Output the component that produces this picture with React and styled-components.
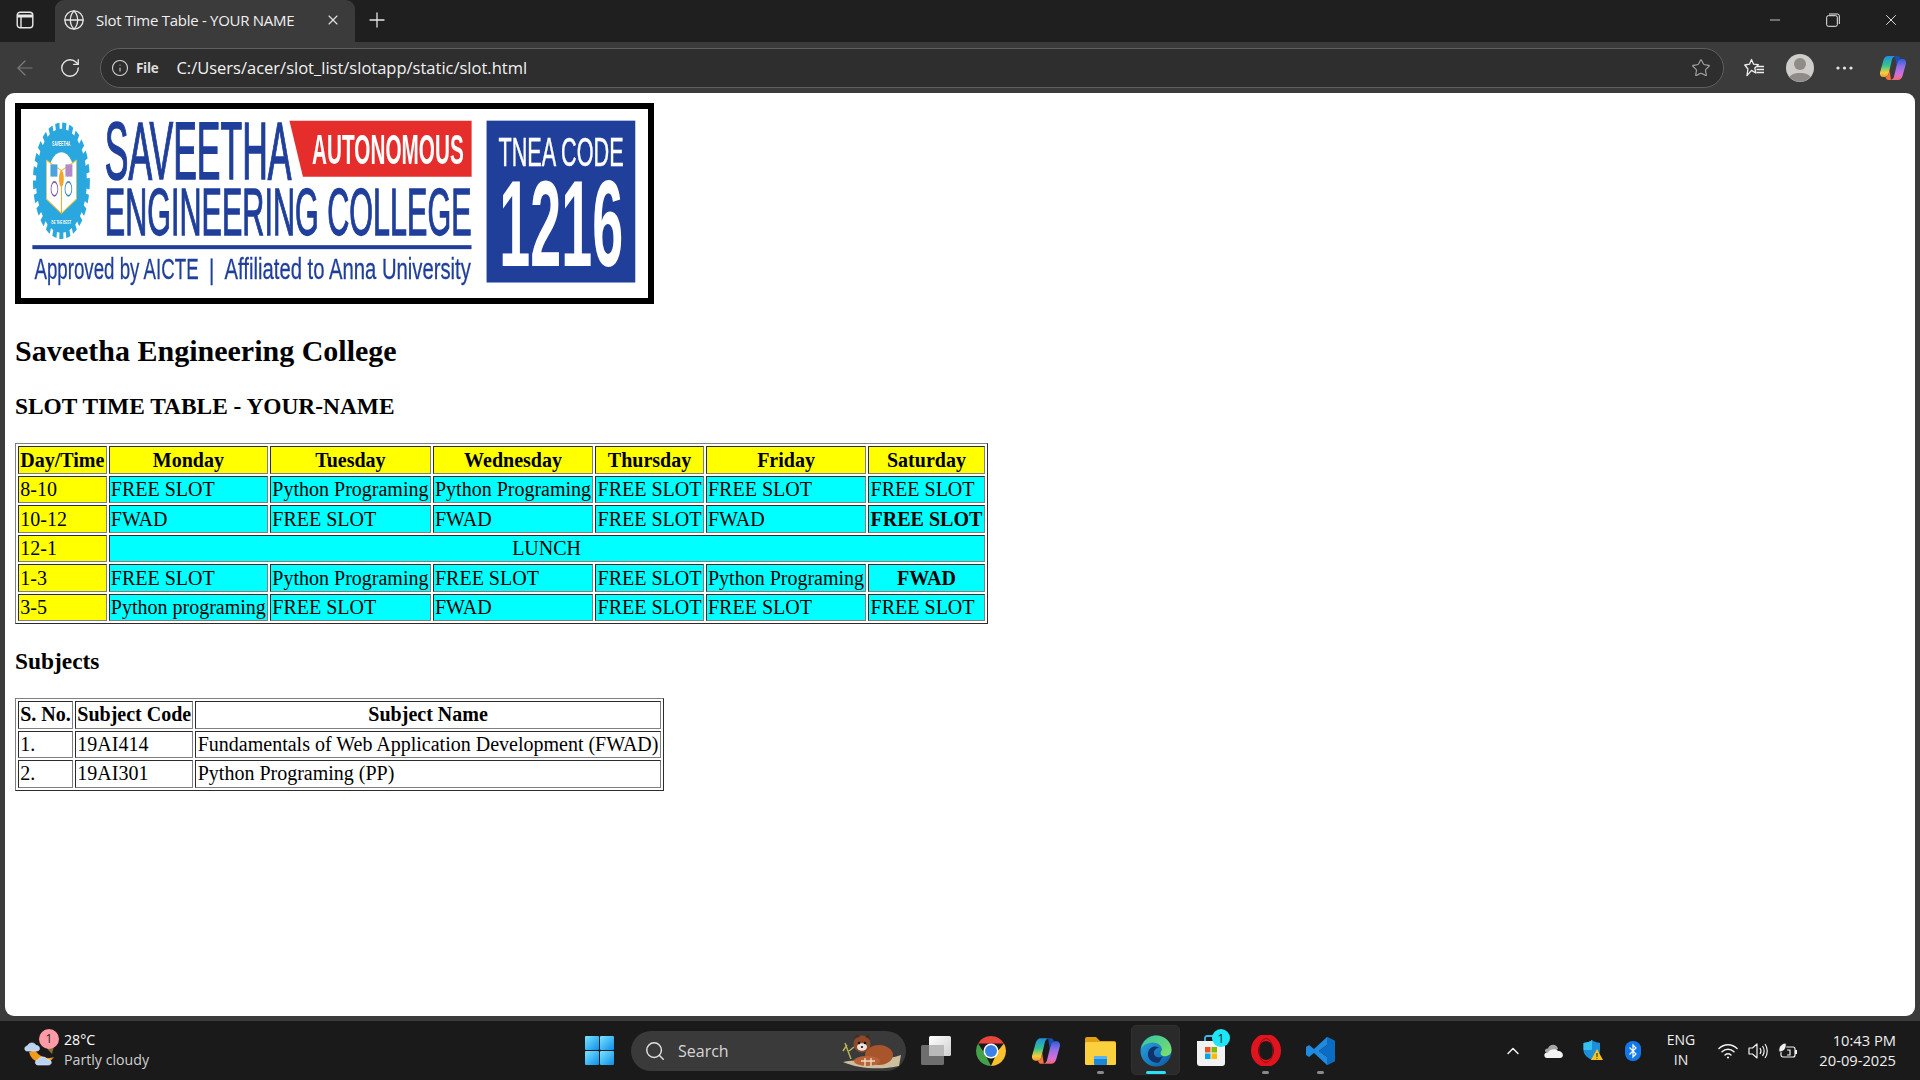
import React from "react";
import styled, { createGlobalStyle } from "styled-components";
import { ArrowLeft, RotateCw, Info, Star, Plus, X, Minus, Globe, ChevronUp, Search } from "lucide-react";

const Global = createGlobalStyle`
  html, body { margin: 0; padding: 0; height: 100%; overflow: hidden; background: #3b3b3b; }
  #root { height: 100%; }
`;

const UI = `"Open Sans", "Noto Sans", sans-serif`;

const Shell = styled.div`
  width: 1920px; height: 1080px; display: flex; flex-direction: column;
  background: #3b3b3b; font-family: ${UI}; color: #fff; overflow: hidden;
`;
const TitleBar = styled.div`
  height: 42px; flex: none; background: #1f1f1f; display: flex; align-items: stretch;
`;
const SideToggle = styled.div`
  width: 49px; margin-right: 6px; padding-bottom: 2px; box-sizing: border-box; flex: none;
  display: flex; align-items: center; justify-content: center;
`;
const Tab = styled.div`
  width: 300px; flex: none; background: #3b3b3b; border-radius: 9px 9px 0 0;
  display: flex; align-items: center; padding: 0 14px 2px 8px; box-sizing: border-box; gap: 11px;
`;
const TabTitle = styled.span`
  flex: 1; font-size: 15px; letter-spacing: -0.28px; color: #f0f0f0; white-space: nowrap;
`;
const NewTab = styled.div`
  width: 42px; flex: none; display: flex; align-items: center; justify-content: center; margin-left: 1px; padding-bottom: 2px; box-sizing: border-box;
`;
const WindowButtons = styled.div`
  margin-left: auto; display: flex; padding-bottom: 2px;
`;
const WinBtn = styled.div`
  width: 58px; display: flex; align-items: center; justify-content: center;
`;
const Toolbar = styled.div`
  height: 51px; flex: none; display: flex; align-items: center; padding: 0 0 0 2.5px; box-sizing: border-box;
`;
const NavBtn = styled.div`
  width: 45px; height: 40px; flex: none; display: flex; align-items: center; justify-content: center;
  color: ${p => (p.$dim ? "#7b7b7b" : "#e6e6e6")};
`;
const Address = styled.div`
  width: 1624px; height: 40px; flex: none; margin-left: 7.5px; box-sizing: border-box;
  border: 1px solid #5f5f5f; border-radius: 20px; background: #2e2e2e;
  display: flex; align-items: center; padding: 0 12px 0 10px;
`;
const FileChip = styled.span`
  font-size: 13.5px; font-weight: 700; color: #ddd; margin: 0 18px 0 7px; letter-spacing: -0.3px;
`;
const Url = styled.span`
  font-size: 16.5px; color: #f2f2f2;
`;
const Tools = styled.div`
  display: flex; align-items: center; flex: none; margin-left: 8px;
`;
const ToolBtn = styled.div`
  width: 45px; height: 40px; display: flex; align-items: center; justify-content: center;
  margin-left: ${p => p.$shift || 0}px;
`;
const Viewport = styled.div`
  flex: 1; min-height: 0; margin: 0 5px; background: #fff; border-radius: 9px; overflow: hidden;
  color: #000; font-family: "Liberation Serif", "Times New Roman", serif;
`;
const Page = styled.div`
  zoom: 1.25; padding: 8px; font-size: 16px; color: #000;
`;
const LogoSvg = styled.svg`
  display: inline-block; width: 501.4px; height: 151.4px; border: 5px solid #000; background: #fff;
  box-sizing: content-box; filter: blur(0.3px);
`;
const CollegeName = styled.h2`
  font-size: 1.5em; margin: 0.83em 0; font-weight: 700;
`;
const Subtitle = styled.h3`
  font-size: 1.17em; margin: 1em 0; font-weight: 700;
`;
const Grid = styled.table.attrs({ border: "1" })`
  font-size: 16px; color: #000;
`;
const Head = styled.th`
  background: ${p => p.$bg || "transparent"};
`;
const Cell = styled.td`
  background: ${p => p.$bg || "transparent"};
  text-align: ${p => (p.$center ? "center" : "left")};
`;
const Strong = styled.th`
  background: #0ff;
`;
const Strip = styled.div`
  height: 5px; flex: none;
`;
const Taskbar = styled.div`
  height: 59px; flex: none; background: #1a1a1a; display: flex; align-items: center; position: relative;
`;
const WeatherArea = styled.div`
  flex: 0 0 572px; height: 100%; box-sizing: border-box; display: flex; align-items: center; padding: 0 0 2px 24px; gap: 7px;
`;
const WeatherIcon = styled.div`
  position: relative; width: 33px; height: 36px; flex: none;
`;
const Badge = styled.span`
  position: absolute; top: -3px; right: -2px; width: 20px; height: 20px; border-radius: 50%;
  background: #ff9aa6; color: #222; font-size: 12px; display: flex; align-items: center; justify-content: center;
`;
const WeatherText = styled.div`
  display: flex; flex-direction: column; line-height: 20px;
`;
const Temp = styled.span`
  font-size: 14.2px; color: #fff;
`;
const Cond = styled.span`
  font-size: 14.2px; color: #d0d0d0;
`;
const TaskCell = styled.div`
  width: 55px; height: 100%; flex: none; display: flex; align-items: center; justify-content: center; position: relative;
`;
const ActiveTile = styled.div`
  position: absolute; left: 3px; right: 3px; top: 4px; bottom: 5px; background: #2a2a2a; border-radius: 5px; border: 1px solid #303030;
`;
const IconHolder = styled.div`
  position: relative; display: flex; line-height: 0;
`;
const RunDot = styled.span`
  position: absolute; bottom: 6px; left: 50%; height: 3px; border-radius: 2px;
  width: ${p => (p.$active ? "20px" : "7px")}; margin-left: ${p => (p.$active ? "-10px" : "-3.5px")};
  background: ${p => (p.$active ? "#29e0f5" : "#8a8a8a")};
`;
const CountBadge = styled.span`
  position: absolute; top: 8px; right: 8px; width: 18px; height: 18px; border-radius: 50%;
  background: #1fe6f5; color: #123; font-size: 12px; display: flex; align-items: center; justify-content: center;
`;
const SearchBox = styled.div`
  width: 275px; height: 40px; flex: none; margin: 0 2px 0 4px; border-radius: 20px; background: #3a3a3a;
  box-sizing: border-box; display: flex; align-items: center; padding-left: 13px; gap: 12px; position: relative;
  color: #d6d6d6; font-size: 16px;
`;
const Panda = styled.svg`
  position: absolute; right: 3px; top: 2px;
`;
const Tray = styled.div`
  margin-left: auto; display: flex; align-items: center; height: 100%; padding-right: 24px;
`;
const TrayCell = styled.div`
  width: ${p => p.$w || 40}px; display: flex; align-items: center; justify-content: center; flex: none;
`;
const Lang = styled.div`
  width: 56px; margin-right: 4px; padding-bottom: 2px; flex: none; text-align: center; font-size: 14px; line-height: 20px; color: #f0f0f0;
`;
const Clock = styled.div`
  width: 93px; flex: none; padding-bottom: 2px; text-align: right; font-size: 14.7px; line-height: 20px; color: #f0f0f0; white-space: nowrap;
`;

const LB = "#1f3f9b";
const Logo = () => (
  <LogoSvg viewBox="0 0 628 190" preserveAspectRatio="none" role="img" aria-label="Saveetha Engineering College logo">
    <g transform="translate(40.5 72) scale(1 2.05)">
      <circle r="26.5" fill="none" stroke="#2aa7df" strokeWidth="4" strokeDasharray="4 2.6" />
      <circle r="25.5" fill="#2aa7df" />
      <circle r="14" fill="#fff" />
      <path d="M-15 -10 L0 -5 L15 -10 L15 9 L0 16 L-15 9 Z" fill="#fff" stroke="#f3c23a" strokeWidth="0.6" />
      <path d="M0 -5 L0 16" stroke="#e6a52a" strokeWidth="1" />
      <rect x="-11" y="-8" width="7" height="6" fill="#4aa3df" />
      <rect x="4" y="-8" width="7" height="6" fill="#b289c9" />
      <circle cx="-7" cy="4" r="3.4" fill="none" stroke="#7b5aa6" strokeWidth="0.8" />
      <circle cx="7" cy="4" r="3.4" fill="none" stroke="#3a86c8" strokeWidth="0.8" />
      <ellipse cx="0" cy="-1" rx="2.4" ry="4" fill="#f2a62a" />
      <text y="-17" textAnchor="middle" fontSize="3.4" fontWeight="700" fill="#fff" fontFamily="Liberation Sans">SAVEETHA</text>
      <text y="21" textAnchor="middle" fontSize="3" fontWeight="700" fill="#fff" fontFamily="Liberation Sans">BE THE BEST</text>
    </g>
    <g fontFamily="'Liberation Sans', sans-serif">
      <text x="84" y="70" fontSize="81" fill={LB} stroke={LB} strokeWidth="1.6" textLength="187" lengthAdjust="spacingAndGlyphs">SAVEETHA</text>
      <polygon points="269,11.7 451.5,11.7 451.5,68 282.5,68" fill="#e52d2b" />
      <text x="291.7" y="55" fontSize="42" fontWeight="700" fill="#fff" textLength="152" lengthAdjust="spacingAndGlyphs">AUTONOMOUS</text>
      <text x="84" y="126.7" fontSize="67" fill={LB} stroke={LB} strokeWidth="1.4" textLength="367.5" lengthAdjust="spacingAndGlyphs">ENGINEERING COLLEGE</text>
      <rect x="11.4" y="136.7" width="440" height="4" fill={LB} />
      <text x="13.5" y="170.7" fontSize="29" fill={LB} stroke={LB} strokeWidth="0.3" textLength="164.5" lengthAdjust="spacingAndGlyphs">Approved by AICTE</text>
      <rect x="190" y="150" width="2" height="27" fill={LB} />
      <text x="204" y="170.7" fontSize="29" fill={LB} stroke={LB} strokeWidth="0.3" textLength="246.7" lengthAdjust="spacingAndGlyphs">Affiliated to Anna University</text>
      <rect x="466.5" y="11.7" width="149" height="162.5" fill={LB} />
      <text x="478.4" y="57" fontSize="40" fill="#fff" stroke="#fff" strokeWidth="0.5" textLength="125.4" lengthAdjust="spacingAndGlyphs">TNEA CODE</text>
      <text x="479.3" y="158" fontSize="122" fontWeight="700" fill="#fff" textLength="124" lengthAdjust="spacingAndGlyphs">1216</text>
    </g>
  </LogoSvg>
);

const SidebarIcon = () => (
  <svg width="18" height="18" viewBox="0 0 18 18" fill="none" stroke="#e8e8e8" strokeWidth="1.4">
    <rect x="1.2" y="1.2" width="15.6" height="15.6" rx="3" />
    <path d="M1.2 5 H16.8" strokeWidth="3" />
    <path d="M5 5 V16.8" />
  </svg>
);
const RestoreIcon = () => (
  <svg width="14" height="14" viewBox="0 0 14 14" fill="none" stroke="#eee" strokeWidth="1">
    <rect x="0.7" y="2.7" width="10.6" height="10.6" rx="1.6" />
    <path d="M3 1 H11.5 A1.8 1.8 0 0 1 13.3 2.8 V11" />
  </svg>
);
const FavIcon = () => (
  <svg width="21" height="20" viewBox="0 0 21 20" fill="none" stroke="#eee" strokeWidth="1.3" strokeLinejoin="round">
    <path d="M7.5 1.5 L9.6 6.2 L14.4 6.7 L10.8 10 L11.8 15 L7.5 12.4 L3 17.6 L3.9 11 L0.8 7 L5.5 6.2 Z" />
    <path d="M13 8.5 H20 M12.5 11.5 H20 M12.5 14.5 H20" />
  </svg>
);
const Avatar = () => (
  <svg width="28" height="28" viewBox="0 0 28 28">
    <circle cx="14" cy="14" r="14" fill="#cfcdca" />
    <circle cx="14" cy="10" r="6" fill="#8f8b87" />
    <path d="M3.5 23 C6 17.5 22 17.5 24.5 23 A14 14 0 0 1 3.5 23 Z" fill="#8f8b87" />
  </svg>
);
const Dots = () => (
  <svg width="17" height="4" viewBox="0 0 17 4" fill="#e6e6e6">
    <circle cx="2" cy="2" r="1.6" /><circle cx="8.5" cy="2" r="1.6" /><circle cx="15" cy="2" r="1.6" />
  </svg>
);
const CopilotIcon = ({ id, size = 28 }) => (
  <svg width={size} height={size} viewBox="0 0 28 28">
    <defs>
      <linearGradient id={`${id}a`} x1="0" y1="0" x2="0" y2="1">
        <stop offset="0" stopColor="#1f8fe0" /><stop offset="0.45" stopColor="#35c28f" /><stop offset="0.8" stopColor="#f4d03f" /><stop offset="1" stopColor="#f49a2a" />
      </linearGradient>
      <linearGradient id={`${id}b`} x1="0" y1="0" x2="0" y2="1">
        <stop offset="0" stopColor="#2a5fd8" /><stop offset="0.35" stopColor="#8f6ee8" /><stop offset="0.75" stopColor="#d46fd8" /><stop offset="1" stopColor="#f46a6a" />
      </linearGradient>
    </defs>
    <path d="M9 2 H17 C15 2 13.5 3.5 13 5.5 L9.5 20 C9 22 7.5 23 6 23 H4 C2 23 .5 21 1 18.5 L4.5 6 C5.3 3.5 7 2 9 2 Z" fill={`url(#${id}a)`} />
    <path d="M19 26 H11 C13 26 14.5 24.5 15 22.5 L18.5 8 C19 6 20.5 5 22 5 H24 C26 5 27.5 7 27 9.5 L23.5 22 C22.7 24.5 21 26 19 26 Z" fill={`url(#${id}b)`} />
    <path d="M16 2 H18.5 C20 2 21 3.2 21.5 5 H22 C20.5 5 19 6 18.5 8 L17.5 12 Z" fill="#1b4fb8" />
    <path d="M12 26 H9.5 C8 26 7 24.8 6.5 23 H6 C7.5 23 9 22 9.5 20 L10.5 16 Z" fill="#f5743a" />
  </svg>
);
const WeatherSvg = () => (
  <svg width="33" height="36" viewBox="0 0 33 36">
    <path d="M5 20 A14 14 0 0 0 30 25 A16 16 0 0 1 11 18 Z" fill="#f09a1e" />
    <path d="M3 19 C0 19 0 14 3.500 14 C4.500 10 11 10 12 13.500 C16 13 17 19 13 19 Z" fill="#b9d3f5" stroke="#e8f0fc" strokeWidth="0.6" />
    <path d="M14 33 C10.500 33 10.500 28 14 28 C15 24 22 24 23 27.500 C28 27 29 33 24 33 Z" fill="#b9d3f5" stroke="#e8f0fc" strokeWidth="0.6" />
    <path d="M18 11 L30 14 L28 22 Z" fill="#f2c04a" opacity="0.5" />
  </svg>
);
const WinLogo = () => (
  <svg width="29" height="29" viewBox="0 0 29 29">
    <defs>
      <linearGradient id="win" x1="0" y1="0" x2="1" y2="1">
        <stop offset="0" stopColor="#7be3ff" /><stop offset="1" stopColor="#0c8fe8" />
      </linearGradient>
    </defs>
    <rect width="14" height="14" rx="1" fill="url(#win)" /><rect x="15" width="14" height="14" rx="1" fill="url(#win)" />
    <rect y="15" width="14" height="14" rx="1" fill="url(#win)" /><rect x="15" y="15" width="14" height="14" rx="1" fill="url(#win)" />
  </svg>
);
const RedPanda = () => (
  <Panda width="62" height="36" viewBox="0 0 62 36">
    <path d="M4 10 L10 26 M6 12 L2 18 M8 18 L13 14" stroke="#b9b65a" strokeWidth="1.4" fill="none" />
    <path d="M2 29 C14 26 44 28 60 22 L58 33 C40 37 18 36 2 29 Z" fill="#cdbf9e" />
    <ellipse cx="38" cy="22" rx="14" ry="10" fill="#a9552c" />
    <ellipse cx="26" cy="28" rx="13" ry="5" fill="#b8623a" />
    <path d="M20 28 H34 M24 25 V33 M30 25 V33" stroke="#f0d8c0" strokeWidth="1.4" />
    <circle cx="21" cy="11" r="8.500" fill="#8c4a2a" />
    <path d="M13 5 L16 1 L19 4 Z M24 4 L28 1 L29 6 Z" fill="#4a2a1a" />
    <ellipse cx="21" cy="14" rx="5" ry="3.800" fill="#efe5da" />
    <circle cx="18" cy="10" r="1.200" fill="#111" /><circle cx="24" cy="10" r="1.200" fill="#111" /><circle cx="21" cy="14" r="1.100" fill="#111" />
  </Panda>
);
const TaskViewIcon = () => (
  <svg width="30" height="29" viewBox="0 0 30 29">
    <defs><linearGradient id="tv" x1="0" y1="0" x2="1" y2="1"><stop offset="0" stopColor="#fff" /><stop offset="1" stopColor="#cfcfcf" /></linearGradient></defs>
    <rect x="8" y="0" width="22" height="20" rx="1.500" fill="url(#tv)" />
    <rect y="9" width="23" height="20" rx="1.500" fill="#6e6e6e" />
    <rect x="8" y="9" width="15" height="11" fill="#b9b9b9" />
  </svg>
);
const ChromeIcon = () => (
  <svg width="30" height="30" viewBox="4 4 40 40">
    <path d="M24 4 A20 20 0 0 1 41.300 14 H24 L6.700 14 A20 20 0 0 1 24 4 Z" fill="#e8453c" />
    <path d="M41.300 14 A20 20 0 0 1 24 44 L33 24 Z" fill="#fbc02d" />
    <path d="M24 44 A20 20 0 0 1 6.700 14 L16 28 Z" fill="#43a047" />
    <circle cx="24" cy="24" r="10" fill="#fff" /><circle cx="24" cy="24" r="8" fill="#3b82e6" />
  </svg>
);
const FolderIcon = () => (
  <svg width="31" height="28" viewBox="0 0 31 28">
    <path d="M0 2 A2 2 0 0 1 2 0 H11 L15 4 H29 A2 2 0 0 1 31 6 V10 H0 Z" fill="#e0a012" />
    <rect y="5" width="31" height="23" rx="1.500" fill="#fbd03f" />
    <rect x="9" y="19" width="13" height="9" rx="1" fill="#1c86d8" />
    <rect x="9" y="19" width="13" height="3" fill="#57b4f0" />
  </svg>
);
const EdgeIcon = () => (
  <svg width="32" height="32" viewBox="0 0 32 32">
    <defs>
      <linearGradient id="e1" x1="0" y1="0" x2="1" y2="1"><stop offset="0" stopColor="#35c5a0" /><stop offset="1" stopColor="#7fe06a" /></linearGradient>
      <linearGradient id="e2" x1="0" y1="0" x2="1" y2="1"><stop offset="0" stopColor="#2aa8e0" /><stop offset="1" stopColor="#0c59a4" /></linearGradient>
    </defs>
    <circle cx="16" cy="16" r="15.500" fill="url(#e2)" />
    <path d="M1 14 C3 5 10 .5 16 .5 C25 .5 31.500 7 31.500 15 C31.500 20 27 22 23 21 C20 20 20 17 22 15 C22 9 15 6 9 8 C5 9 2 11 1 14 Z" fill="url(#e1)" />
    <path d="M23 21 C19 24 14 22 14 18 C14 15 16 13 19 13 C15 10 9 12 8 18 C7 24 13 29 19 27.500 Z" fill="#10336e" />
  </svg>
);
const StoreIcon = () => (
  <svg width="30" height="32" viewBox="0 0 30 32">
    <path d="M9 6 V3 A2 2 0 0 1 11 1 H19 A2 2 0 0 1 21 3 V6" fill="none" stroke="#3db6ef" strokeWidth="1.800" />
    <path d="M1 6 H29 V28 A3 3 0 0 1 26 31 H4 A3 3 0 0 1 1 28 Z" fill="#f2f2f2" />
    <rect x="9" y="12" width="5.500" height="5.500" fill="#f25022" /><rect x="15.500" y="12" width="5.500" height="5.500" fill="#7fba00" />
    <rect x="9" y="18.500" width="5.500" height="5.500" fill="#00a4ef" /><rect x="15.500" y="18.500" width="5.500" height="5.500" fill="#ffb900" />
  </svg>
);
const OperaIcon = () => (
  <svg width="30" height="31" viewBox="0 0 30 31">
    <ellipse cx="15" cy="15.500" rx="11.500" ry="13" fill="none" stroke="#e0141f" strokeWidth="7" />
    <ellipse cx="15" cy="15.500" rx="7" ry="12" fill="none" stroke="#9c0a12" strokeWidth="1" />
  </svg>
);
const CodeIcon = () => (
  <svg width="30" height="30" viewBox="0 0 30 30">
    <path d="M21 1 L29 5 V25 L21 29 L8 17 L3 21 L0 19 V11 L3 9 L8 13 Z M21 9 L13 15 L21 21 Z" fill="#1f8ae0" fillRule="evenodd" />
    <path d="M21 1 L29 5 V25 L21 29 Z M21 9 L13 15 L21 21 Z" fill="#0a6cc2" fillRule="evenodd" />
  </svg>
);
const CloudIcon = () => (
  <svg width="21" height="14" viewBox="0 0 21 14">
    <path d="M5 9 C1 9 1 4 5 4.500 C6.500 -0.500 14 -0.500 15 5 L8 9 Z" fill="#a5a5a5" />
    <path d="M4 14 C0.500 14 0 8 5 8.500 C7 4.500 13.500 4.500 15 7 C20 6.500 22 14 17 14 Z" fill="#f3f3f3" />
  </svg>
);
const ShieldIcon = () => (
  <svg width="20" height="21" viewBox="0 0 20 21">
    <path d="M9 0 C11 2 14 2.500 17 3 V10 C17 15 13 18 9 20 C5 18 0.500 15 0.500 10 V3 C4 2.500 7 2 9 0 Z" fill="#1d8fd8" />
    <path d="M9 0 V10 H0.500 V3 C4 2.500 7 2 9 0 Z" fill="#35c0ef" />
    <path d="M14 9 L20 20 H8 Z" fill="#f8c31d" />
    <path d="M14 13 V17 M14 18 V19" stroke="#222" strokeWidth="1" />
  </svg>
);
const BtIcon = () => (
  <svg width="16" height="20" viewBox="0 0 16 20">
    <rect width="16" height="20" rx="7.500" fill="#1479e8" />
    <path d="M4.500 6.500 L11 13 L8 16 V4 L11 7 L4.500 13.500" fill="none" stroke="#fff" strokeWidth="1.200" />
  </svg>
);
const WifiIcon = () => (
  <svg width="20" height="16" viewBox="0 0 20 16" fill="none" stroke="#f2f2f2" strokeWidth="1.500" strokeLinecap="round">
    <path d="M1 5.500 C6 .5 14 .5 19 5.500" /><path d="M4 8.800 C7.500 5.500 12.500 5.500 16 8.800" /><path d="M7 12 C8.800 10.500 11.200 10.500 13 12" />
    <circle cx="10" cy="14.500" r="1.100" fill="#f2f2f2" stroke="none" />
  </svg>
);
const VolIcon = () => (
  <svg width="20" height="18" viewBox="0 0 20 18" fill="none" stroke="#f2f2f2" strokeWidth="1.200" strokeLinejoin="round">
    <path d="M1 6 H4.500 L9 2 V16 L4.500 12 H1 Z" />
    <path d="M12 6 C13.300 8 13.300 10 12 12" /><path d="M14.500 4 C16.500 7 16.500 11 14.500 14" /><path d="M17 2 C20 6 20 12 17 16" />
  </svg>
);
const BattIcon = () => (
  <svg width="20" height="18" viewBox="0 0 20 18" fill="none" stroke="#f2f2f2" strokeWidth="1.200">
    <rect x="3" y="5" width="14" height="10" rx="2" />
    <path d="M18 8 V12" strokeWidth="2" />
    <path d="M1 9 C0 4 5 1 8 1 C9 6 6 10 1 10 Z" fill="#f2f2f2" stroke="#1a1a1a" strokeWidth="0.800" />
    <path d="M9 8 H12 V13 H9" />
  </svg>
);

const Y = "#ff0";
const A = "#0ff";
const free = "FREE SLOT";
const py = "Python Programing";

const Row = ({ time, cells }) => (
  <tr>
    <Cell $bg={Y}>{time}</Cell>
    {cells.map((c, i) => <Cell key={i} $bg={A}>{c}</Cell>)}
  </tr>
);

export default function App() {
  return (
    <Shell>
      <Global />
      <TitleBar>
        <SideToggle><SidebarIcon /></SideToggle>
        <Tab>
          <Globe size={22} color="#e6e6e6" strokeWidth={1.4} />
          <TabTitle>Slot Time Table - YOUR NAME</TabTitle>
          <X size={16} color="#e6e6e6" strokeWidth={1.6} />
        </Tab>
        <NewTab><Plus size={24} color="#e6e6e6" strokeWidth={1.3} /></NewTab>
        <WindowButtons>
          <WinBtn><Minus size={16} color="#eee" strokeWidth={1.2} /></WinBtn>
          <WinBtn><RestoreIcon /></WinBtn>
          <WinBtn><X size={18} color="#eee" strokeWidth={1.2} /></WinBtn>
        </WindowButtons>
      </TitleBar>
      <Toolbar>
        <NavBtn $dim><ArrowLeft size={24} strokeWidth={1.2} /></NavBtn>
        <NavBtn><RotateCw size={22} strokeWidth={1.5} /></NavBtn>
        <Address>
          <Info size={18} color="#d8d8d8" strokeWidth={1.4} />
          <FileChip>File</FileChip>
          <Url>C:/Users/acer/slot_list/slotapp/static/slot.html</Url>
          <Star size={20} color="#a8a8a8" strokeWidth={1.3} style={{ marginLeft: "auto" }} />
        </Address>
        <Tools>
          <ToolBtn><FavIcon /></ToolBtn>
          <ToolBtn><Avatar /></ToolBtn>
          <ToolBtn><Dots /></ToolBtn>
          <ToolBtn $shift={3}><CopilotIcon id="cpa" /></ToolBtn>
        </Tools>
      </Toolbar>
      <Viewport>
        <Page>
          <div><Logo /></div>
          <CollegeName>Saveetha Engineering College</CollegeName>
          <Subtitle>SLOT TIME TABLE - YOUR-NAME</Subtitle>
          <Grid>
            <tbody>
              <tr>
                {["Day/Time", "Monday", "Tuesday", "Wednesday", "Thursday", "Friday", "Saturday"].map(d => <Head key={d} $bg={Y}>{d}</Head>)}
              </tr>
              <Row time="8-10" cells={[free, py, py, free, free, free]} />
              <tr>
                <Cell $bg={Y}>10-12</Cell>
                <Cell $bg={A}>FWAD</Cell><Cell $bg={A}>{free}</Cell><Cell $bg={A}>FWAD</Cell>
                <Cell $bg={A}>{free}</Cell><Cell $bg={A}>FWAD</Cell><Strong>{free}</Strong>
              </tr>
              <tr>
                <Cell $bg={Y}>12-1</Cell>
                <Cell $bg={A} $center colSpan={6}>LUNCH</Cell>
              </tr>
              <tr>
                <Cell $bg={Y}>1-3</Cell>
                <Cell $bg={A}>{free}</Cell><Cell $bg={A}>{py}</Cell><Cell $bg={A}>{free}</Cell>
                <Cell $bg={A}>{free}</Cell><Cell $bg={A}>{py}</Cell><Strong>FWAD</Strong>
              </tr>
              <Row time="3-5" cells={["Python programing", free, "FWAD", free, free, free]} />
            </tbody>
          </Grid>
          <Subtitle>Subjects</Subtitle>
          <Grid>
            <tbody>
              <tr><Head>S. No.</Head><Head>Subject Code</Head><Head>Subject Name</Head></tr>
              <tr><Cell>1.</Cell><Cell>19AI414</Cell><Cell>Fundamentals of Web Application Development (FWAD)</Cell></tr>
              <tr><Cell>2.</Cell><Cell>19AI301</Cell><Cell>Python Programing (PP)</Cell></tr>
            </tbody>
          </Grid>
        </Page>
      </Viewport>
      <Strip />
      <Taskbar>
        <WeatherArea>
          <WeatherIcon><WeatherSvg /><Badge>1</Badge></WeatherIcon>
          <WeatherText><Temp>28°C</Temp><Cond>Partly cloudy</Cond></WeatherText>
        </WeatherArea>
        <TaskCell><WinLogo /></TaskCell>
        <SearchBox>
          <Search size={22} strokeWidth={1.6} color="#e0e0e0" />
          <span>Search</span>
          <RedPanda />
        </SearchBox>
        <TaskCell><TaskViewIcon /></TaskCell>
        <TaskCell><ChromeIcon /></TaskCell>
        <TaskCell><CopilotIcon id="cpb" size={30} /></TaskCell>
        <TaskCell><FolderIcon /><RunDot /></TaskCell>
        <TaskCell><ActiveTile /><IconHolder><EdgeIcon /></IconHolder><RunDot $active /></TaskCell>
        <TaskCell><StoreIcon /><CountBadge>1</CountBadge></TaskCell>
        <TaskCell><OperaIcon /><RunDot /></TaskCell>
        <TaskCell><CodeIcon /><RunDot /></TaskCell>
        <Tray>
          <TrayCell><ChevronUp size={20} color="#f2f2f2" strokeWidth={1.8} /></TrayCell>
          <TrayCell><CloudIcon /></TrayCell>
          <TrayCell><ShieldIcon /></TrayCell>
          <TrayCell><BtIcon /></TrayCell>
          <Lang>ENG<br />IN</Lang>
          <TrayCell $w={30}><WifiIcon /></TrayCell>
          <TrayCell $w={30}><VolIcon /></TrayCell>
          <TrayCell $w={30}><BattIcon /></TrayCell>
          <Clock>10:43 PM<br />20-09-2025</Clock>
        </Tray>
      </Taskbar>
    </Shell>
  );
}
